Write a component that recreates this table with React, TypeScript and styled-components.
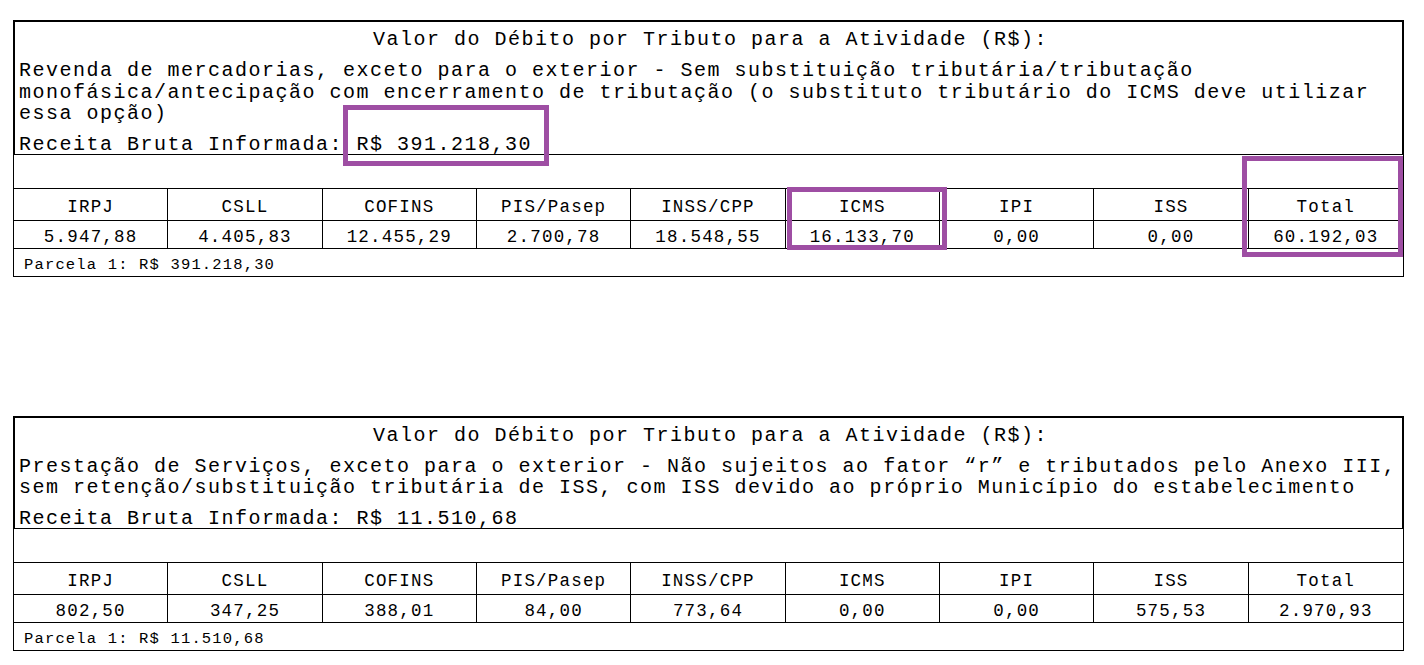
import React from "react";
import styled, { createGlobalStyle } from "styled-components";

const GlobalStyle = createGlobalStyle`
  html, body {
    margin: 0;
    padding: 0;
    background: #ffffff;
  }
  body {
    font-family: "Liberation Mono", "Courier New", monospace;
    color: #000000;
  }
`;

interface Activity {
  description: string[];
  receita: string;
  header: string[];
  values: string[];
  parcela: string;
}

const HEADERS = ["IRPJ", "CSLL", "COFINS", "PIS/Pasep", "INSS/CPP", "ICMS", "IPI", "ISS", "Total"];

const activities: Activity[] = [
  {
    description: [
      "Revenda de mercadorias, exceto para o exterior - Sem substituição tributária/tributação",
      "monofásica/antecipação com encerramento de tributação (o substituto tributário do ICMS deve utilizar",
      "essa opção)",
    ],
    receita: "R$ 391.218,30",
    header: HEADERS,
    values: ["5.947,88", "4.405,83", "12.455,29", "2.700,78", "18.548,55", "16.133,70", "0,00", "0,00", "60.192,03"],
    parcela: "Parcela 1: R$ 391.218,30",
  },
  {
    description: [
      "Prestação de Serviços, exceto para o exterior - Não sujeitos ao fator “r” e tributados pelo Anexo III,",
      "sem retenção/substituição tributária de ISS, com ISS devido ao próprio Município do estabelecimento",
    ],
    receita: "R$ 11.510,68",
    header: HEADERS,
    values: ["802,50", "347,25", "388,01", "84,00", "773,64", "0,00", "0,00", "575,53", "2.970,93"],
    parcela: "Parcela 1: R$ 11.510,68",
  },
];

// highlight boxes drawn over the first activity (marked by hand on the original print)
const highlights = [
  { left: 330, top: 85, width: 206, height: 61 },
  { left: 774, top: 167, width: 160, height: 63 },
  { left: 1229, top: 136, width: 161, height: 101 },
];

const App: React.FC = () => {
  return (
    <>
      <GlobalStyle />
      <StyledPage>
        {activities.map((activity, i) => (
          <StyledSection key={i}>
            <StyledHead>
              <StyledTitle>Valor do Débito por Tributo para a Atividade (R$):</StyledTitle>
              <StyledDescription>
                {activity.description.map((line) => (
                  <StyledLine key={line}>{line}</StyledLine>
                ))}
              </StyledDescription>
              <StyledReceita>Receita Bruta Informada: {activity.receita}</StyledReceita>
            </StyledHead>
            <StyledBody>
              <StyledEmptyRow />
              <StyledGridRow $height={31}>
                {activity.header.map((h) => (
                  <StyledCell key={h} $pad={8}>
                    {h}
                  </StyledCell>
                ))}
              </StyledGridRow>
              <StyledGridRow $height={27}>
                {activity.values.map((v, j) => (
                  <StyledCell key={j} $pad={6}>
                    {v}
                  </StyledCell>
                ))}
              </StyledGridRow>
              <StyledParcela>{activity.parcela}</StyledParcela>
            </StyledBody>
            {i === 0 &&
              highlights.map((h, k) => (
                <StyledHighlight
                  key={k}
                  style={{ left: h.left, top: h.top, width: h.width, height: h.height }}
                />
              ))}
          </StyledSection>
        ))}
      </StyledPage>
    </>
  );
};

const StyledPage = styled.div`
  padding: 20px 0 0 13px;
  width: 1391px;
`;

const StyledSection = styled.div`
  position: relative;
  width: 1391px;
  & + & {
    margin-top: 139px;
  }
`;

const StyledHead = styled.div`
  border: 2px solid #000;
  border-bottom: 1px solid #000;
  padding: 7px 0 0 4px;
  font-size: 20px;
  letter-spacing: 1.5px;
  line-height: 22px;
`;

const StyledTitle = styled.div`
  text-align: center;
  white-space: nowrap;
  height: 22px;
`;

const StyledDescription = styled.div`
  margin-top: 9px;
  line-height: 21.5px;
`;

const StyledLine = styled.div`
  white-space: nowrap;
`;

const StyledReceita = styled.div`
  margin-top: 9px;
  height: 20px;
  white-space: nowrap;
`;

const StyledBody = styled.div`
  border: 1px solid #000;
  border-top: none;
`;

const StyledEmptyRow = styled.div`
  height: 33px;
  border-bottom: 1px solid #000;
`;

const StyledGridRow = styled.div<{ $height: number }>`
  display: grid;
  grid-template-columns: repeat(9, 1fr);
  height: ${(props) => props.$height}px;
  border-bottom: 1px solid #000;
`;

const StyledCell = styled.div<{ $pad: number }>`
  box-sizing: border-box;
  padding-top: ${(props) => props.$pad}px;
  text-align: center;
  font-size: 17.5px;
  letter-spacing: 1.2px;
  line-height: 20px;
  white-space: nowrap;
  border-right: 1px solid #000;
  &:last-child {
    border-right: none;
  }
`;

const StyledParcela = styled.div`
  box-sizing: border-box;
  height: 27px;
  padding: 8px 0 0 10px;
  font-size: 15.5px;
  letter-spacing: 1.16px;
  line-height: 17px;
  white-space: nowrap;
`;

const StyledHighlight = styled.div`
  position: absolute;
  box-sizing: border-box;
  border: 5px solid #9e4ea3;
  pointer-events: none;
`;

export default App;
